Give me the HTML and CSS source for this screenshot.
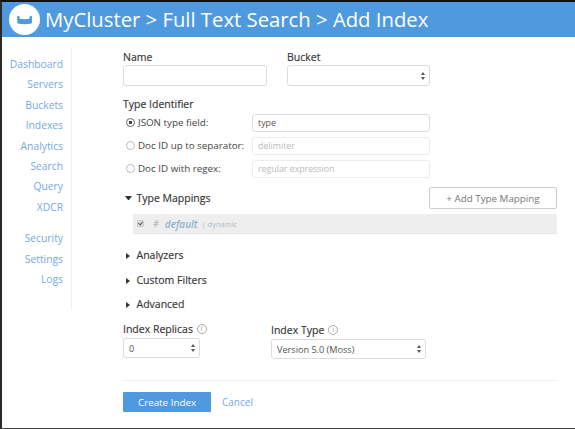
FILE: index.html
```html
<!DOCTYPE html>
<html lang="en">
<head>
    <meta charset="UTF-8">
    <meta name="viewport" content="width=device-width, initial-scale=1.0">
    <title>Add Index</title>
    <link rel="stylesheet" href="styles.css">
</head>
<body>

    <header class="topbar">
        <svg class="logo" width="31" height="31" viewBox="0 0 32 32">
            <circle cx="16" cy="16" r="16" fill="#fff"/>
            <path d="M8.500 13.200c0-.7.500-1.200 1.200-1.200.6 0 1.100.4 1.200 1l.2 2.300c1.500.3 3 .4 5 .4s3.500-.1 5-.4l.2-2.300c.1-.6.600-1 1.200-1 .7 0 1.200.5 1.200 1.200v5.300c0 1.100-.6 1.800-1.700 2-1.800.3-3.800.4-5.900.4s-4.100-.1-5.900-.4c-1.100-.2-1.700-.9-1.700-2z" fill="#4f9ade"/>
        </svg>
        <h1>MyCluster &gt; Full Text Search &gt; Add Index</h1>
    </header>

    <div class="page">
        <nav class="sidenav">
            <a href="#">Dashboard</a>
            <a href="#">Servers</a>
            <a href="#">Buckets</a>
            <a href="#">Indexes</a>
            <a href="#">Analytics</a>
            <a href="#">Search</a>
            <a href="#">Query</a>
            <a href="#">XDCR</a>
            <a href="#" class="nav-gap">Security</a>
            <a href="#">Settings</a>
            <a href="#">Logs</a>
        </nav>

        <form class="index-form">
            <div class="row-top">
                <div class="field">
                    <label for="name">Name</label>
                    <input type="text" id="name" class="name-input">
                </div>
                <div class="field">
                    <label for="bucket">Bucket</label>
                    <div class="select-box bucket-select" id="bucket"><span></span><i class="arrows"></i></div>
                </div>
            </div>

            <div class="type-id">
                <div class="group-title">Type Identifier</div>
                <div class="radio-row">
                    <span class="radio checked"></span>
                    <span class="radio-label">JSON type field:</span>
                    <input type="text" value="type" class="type-input">
                </div>
                <div class="radio-row">
                    <span class="radio"></span>
                    <span class="radio-label">Doc ID up to separator:</span>
                    <input type="text" placeholder="delimiter" class="type-input off">
                </div>
                <div class="radio-row">
                    <span class="radio"></span>
                    <span class="radio-label">Doc ID with regex:</span>
                    <input type="text" placeholder="regular expression" class="type-input off">
                </div>
            </div>

            <div class="mappings-head">
                <div class="section-title"><i class="caret-down"></i>Type Mappings</div>
                <button type="button" class="btn-outline">+ Add Type Mapping</button>
            </div>
            <div class="mapping-row">
                <span class="check"></span>
                <span class="hash">#</span>
                <span class="mapping-name">default</span>
                <span class="mapping-meta">| dynamic</span>
            </div>

            <div class="section-title analyzers"><i class="caret-right"></i>Analyzers</div>
            <div class="section-title filters"><i class="caret-right"></i>Custom Filters</div>
            <div class="section-title advanced"><i class="caret-right"></i>Advanced</div>

            <div class="row-bottom">
                <div class="field replicas">
                    <div class="small-label">Index Replicas <span class="info">i</span></div>
                    <div class="select-box replicas-select"><span>0</span><i class="arrows"></i></div>
                </div>
                <div class="field index-type">
                    <div class="small-label">Index Type <span class="info">i</span></div>
                    <div class="select-box type-select"><span>Version 5.0 (Moss)</span><i class="arrows"></i></div>
                </div>
            </div>

            <div class="actions">
                <button type="button" class="btn-primary">Create Index</button>
                <a href="#" class="link-cancel">Cancel</a>
            </div>
        </form>
    </div>

</body>
</html>
```
FILE: styles.css
```css
body {
    margin: 0;
    height: 429px;
    overflow: hidden;
    box-sizing: border-box;
    font-family: "Open Sans", sans-serif;
    font-size: 11px;
    color: #333;
    background-color: #fff;
    border-top: 2px solid #111;
    border-left: 2px solid #2a2a2a;
    border-bottom: 1px solid #444;
}

.topbar {
    display: flex;
    align-items: center;
    height: 35px;
    padding-left: 7px;
    background-color: #4f9ade;
    color: #fff;
}

.logo {
    flex: none;
    margin-right: 5px;
}

.topbar h1 {
    margin: 0 0 2px;
    font-size: 20.300px;
    font-weight: 400;
    white-space: nowrap;
}

.page {
    display: flex;
}

.sidenav {
    flex: none;
    display: flex;
    flex-direction: column;
    align-items: flex-end;
    box-sizing: border-box;
    width: 70px;
    height: 262px;
    margin-top: 11px;
    padding: 6px 8px 0 0;
    border-right: 1px solid #f0f0f0;
}

.sidenav a {
    height: 20.400px;
    line-height: 20px;
    font-size: 10.300px;
    color: #74a9e2;
    text-decoration: none;
}

.sidenav .nav-gap {
    margin-top: 11px;
}

.index-form {
    flex: 1;
    padding: 13px 18px 0 51px;
}

.row-top {
    display: flex;
    gap: 20px;
}

label, .group-title, .small-label {
    display: block;
    font-weight: 400;
    font-size: 10.500px;
    line-height: 15px;
    color: #333;
    -webkit-text-stroke: 0.15px #333;
}

input[type="text"], .select-box {
    box-sizing: border-box;
    border: 1px solid #dcdcdc;
    border-radius: 3px;
    background-color: #fff;
    font-family: inherit;
    font-size: 8.800px;
    color: #555;
    outline: none;
}

.name-input {
    display: block;
    width: 144px;
    height: 21px;
}

.select-box {
    display: flex;
    align-items: center;
    justify-content: space-between;
    padding: 0 3px 0 5px;
    font-size: 9.150px;
}

.bucket-select {
    width: 143px;
    height: 21px;
}

.arrows {
    position: relative;
    display: block;
    width: 5px;
    height: 8px;
}

.arrows::before, .arrows::after {
    content: "";
    position: absolute;
    left: 0;
    border-left: 2.500px solid transparent;
    border-right: 2.500px solid transparent;
}

.arrows::before {
    top: 0;
    border-bottom: 3px solid #555;
}

.arrows::after {
    bottom: 0;
    border-top: 3px solid #555;
}

.type-id {
    margin-top: 12px;
}

.group-title {
    line-height: 13px;
}

.radio-row {
    display: flex;
    align-items: center;
    height: 23px;
    padding-left: 3px;
}

.radio {
    flex: none;
    box-sizing: border-box;
    width: 9px;
    height: 9px;
    border: 1px solid #bbb;
    border-radius: 50%;
    margin-right: 3px;
}

.radio.checked {
    border-color: #666;
    background: radial-gradient(circle, #444 0 1.500px, #fff 2px);
}

.radio-label {
    width: 114px;
    font-size: 9.800px;
    color: #444;
    white-space: nowrap;
}

.type-input {
    width: 178px;
    height: 18px;
    padding: 0 5px;
}

.type-input.off {
    border-color: #ececec;
}

.type-input.off::placeholder {
    color: #bbb;
    opacity: 1;
}

.mappings-head {
    display: flex;
    align-items: center;
    justify-content: space-between;
    margin-top: 7px;
}

.section-title {
    display: flex;
    align-items: center;
    font-weight: 400;
    font-size: 10.500px;
    line-height: 15px;
    color: #333;
    -webkit-text-stroke: 0.15px #333;
}

.caret-down, .caret-right {
    display: block;
    flex: none;
    box-sizing: border-box;
}

.caret-down {
    width: 7px;
    margin: 0 5px 0 1.500px;
    border-left: 3.500px solid transparent;
    border-right: 3.500px solid transparent;
    border-top: 4px solid #333;
}

.caret-right {
    margin: 0 7px 0 2.500px;
    border-top: 3.500px solid transparent;
    border-bottom: 3.500px solid transparent;
    border-left: 4px solid #333;
}

.btn-outline {
    box-sizing: border-box;
    width: 128px;
    height: 22px;
    border: 1px solid #ccc;
    border-radius: 2px;
    background-color: #fff;
    font-family: inherit;
    font-size: 9.800px;
    color: #777;
    padding: 0;
}

.mapping-row {
    display: flex;
    align-items: center;
    height: 19px;
    margin: 5px 0 0 10px;
    padding-left: 4px;
    background-color: #eee;
    border-bottom: 1px solid #e6e6e6;
}

.check {
    position: relative;
    box-sizing: border-box;
    width: 7px;
    height: 7px;
    background-color: #ddd;
    border: 1px solid #ccc;
    border-radius: 1px;
}

.check::after {
    content: "";
    position: absolute;
    left: 1px;
    top: 0;
    width: 2px;
    height: 3px;
    border-right: 1px solid #555;
    border-bottom: 1px solid #555;
    transform: rotate(40deg);
}

.hash {
    margin-left: 9px;
    font-size: 9px;
    font-style: italic;
    color: #aab;
}

.mapping-name {
    margin-left: 6px;
    font-size: 10px;
    font-style: italic;
    font-weight: 600;
    color: #8fb3c9;
}

.mapping-meta {
    margin-left: 4px;
    font-size: 7.500px;
    color: #b0bcc4;
}

.analyzers {
    margin-top: 14px;
}

.filters {
    margin-top: 10px;
}

.advanced {
    margin-top: 9px;
}

.row-bottom {
    display: flex;
    margin-top: 10px;
}

.info {
    display: inline-block;
    box-sizing: border-box;
    width: 10px;
    height: 10px;
    margin-left: 1px;
    border: 1px solid #aaa;
    border-radius: 50%;
    font-size: 7px;
    line-height: 8px;
    font-weight: 400;
    text-align: center;
    vertical-align: 2px;
    color: #999;
    -webkit-text-stroke: 0;
}

.replicas {
    width: 148px;
}

.replicas-select {
    width: 77px;
    height: 20px;
    margin-top: 1px;
}

.index-type {
    margin-top: 1px;
}

.type-select {
    width: 155px;
    height: 20px;
    margin-top: 1px;
}

.actions {
    display: flex;
    align-items: center;
    gap: 11px;
    margin-top: 21px;
    padding-top: 11px;
    border-top: 1px solid #eee;
}

.btn-primary {
    box-sizing: border-box;
    width: 88px;
    height: 20px;
    padding: 0;
    border: none;
    border-radius: 1px;
    background-color: #4f9ade;
    color: #fff;
    font-family: inherit;
    font-size: 9.800px;
}

.link-cancel {
    font-size: 10px;
    color: #74a9e2;
    text-decoration: none;
}
```
